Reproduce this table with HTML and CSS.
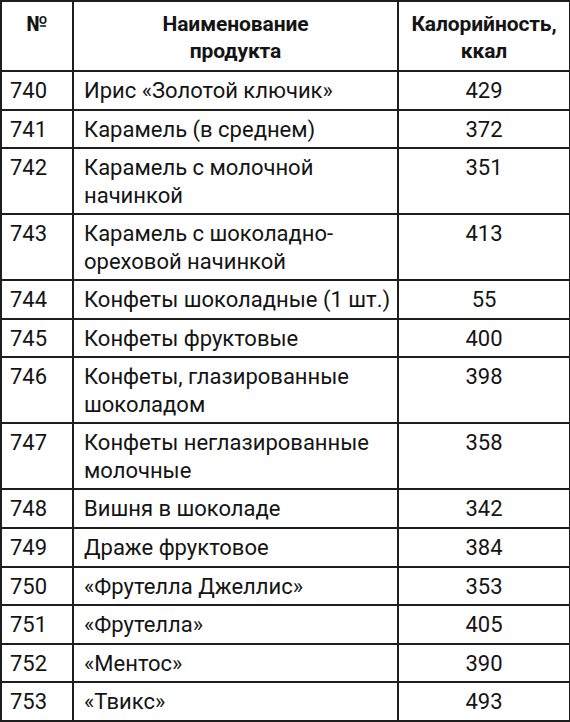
FILE: index.html
```html
<!DOCTYPE html>
<html lang="ru">
<head>
<meta charset="utf-8">
<link rel="stylesheet" href="styles.css">
</head>
<body>
<table class="kcal">
  <colgroup>
    <col class="c-num">
    <col class="c-name">
    <col class="c-val">
  </colgroup>
  <thead>
    <tr class="head">
      <th>№</th>
      <th>Наименование<br>продукта</th>
      <th>Калорийность,<br>ккал</th>
    </tr>
  </thead>
  <tbody>
    <tr class="one"><td>740</td><td>Ирис «Золотой ключик»</td><td>429</td></tr>
    <tr class="one"><td>741</td><td>Карамель (в среднем)</td><td>372</td></tr>
    <tr class="two"><td>742</td><td>Карамель с молочной<br>начинкой</td><td>351</td></tr>
    <tr class="two"><td>743</td><td>Карамель с шоколадно-<br>ореховой начинкой</td><td>413</td></tr>
    <tr class="one"><td>744</td><td>Конфеты шоколадные (1 шт.)</td><td>55</td></tr>
    <tr class="one"><td>745</td><td>Конфеты фруктовые</td><td>400</td></tr>
    <tr class="two"><td>746</td><td>Конфеты, глазированные<br>шоколадом</td><td>398</td></tr>
    <tr class="two"><td>747</td><td>Конфеты неглазированные<br>молочные</td><td>358</td></tr>
    <tr class="one"><td>748</td><td>Вишня в шоколаде</td><td>342</td></tr>
    <tr class="one"><td>749</td><td>Драже фруктовое</td><td>384</td></tr>
    <tr class="one"><td>750</td><td>«Фрутелла Джеллис»</td><td>353</td></tr>
    <tr class="one"><td>751</td><td>«Фрутелла»</td><td>405</td></tr>
    <tr class="one"><td>752</td><td>«Ментос»</td><td>390</td></tr>
    <tr class="one"><td>753</td><td>«Твикс»</td><td>493</td></tr>
  </tbody>
</table>
</body>
</html>
```
FILE: styles.css
```css
html, body {
  margin: 0;
  padding: 0;
  background: #ffffff;
}
body {
  font-family: Roboto, "Liberation Sans", sans-serif;
  color: #141414;
}
.kcal {
  border-collapse: collapse;
  width: 569px;
  margin: 0;
  table-layout: fixed;
}
.c-num { width: 72px; }
.c-name { width: 325px; }
.c-val { width: 172px; }
.kcal th, .kcal td {
  border: 2px solid #1e1e1e;
  vertical-align: top;
  padding: 0;
  box-sizing: border-box;
  white-space: nowrap;
}
.kcal th {
  font-weight: bold;
  font-size: 21px;
  line-height: 27px;
  letter-spacing: -0.1px;
  text-align: center;
  padding-top: 9px;
  height: 70px;
}
.kcal td {
  font-size: 22px;
  line-height: 28px;
  padding-top: 5px;
}
.kcal td:nth-child(1) { padding-left: 8px; }
.kcal td:nth-child(2) { padding-left: 10px; }
.kcal td:nth-child(3) { text-align: center; }
.one td { height: 38.6px; }
.two td { height: 66px; }
```
